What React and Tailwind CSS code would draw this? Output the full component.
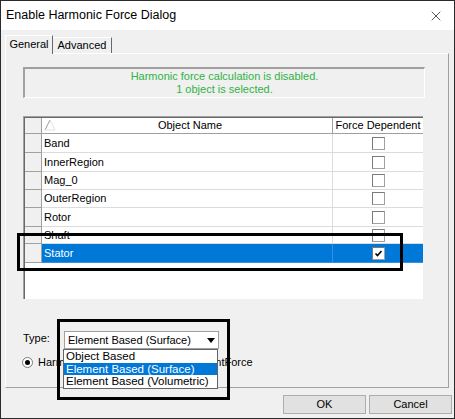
import { X } from "lucide-react";

const rows = [
  { name: "Band", h: "h-[19px]", checked: false },
  { name: "InnerRegion", h: "h-[19px]", checked: false },
  { name: "Mag_0", h: "h-[18px]", checked: false },
  { name: "OuterRegion", h: "h-[18px]", checked: false },
  { name: "Rotor", h: "h-[19px]", checked: false },
  { name: "Shaft", h: "h-[17px]", checked: false },
  { name: "Stator", h: "h-[19px]", checked: true, selected: true },
];

function CheckBox({ checked }) {
  return (
    <span className="flex h-[13px] w-[13px] items-center justify-center border border-[#a0a0a0] border-l-[#7a7a7a] border-t-[#7a7a7a] bg-white">
      {checked && (
        <svg width="9" height="9" viewBox="0 0 9 9">
          <path d="M1.5 4.5 L3.5 6.5 L7.5 2" fill="none" stroke="#000" strokeWidth="1.6" />
        </svg>
      )}
    </span>
  );
}

function ObjectGrid() {
  return (
    <div className="ml-[17px] mt-[18px] h-[183px] w-[400px] border-l border-t border-[#a0a0a0] border-b-white border-r-white bg-white">
      <div className="h-full border-l border-t border-[#696969] border-r-0 border-b-0">
        <div className="flex h-[16px] border-b border-[#a0a0a0]">
          <div className="w-[17px] border-r border-[#a0a0a0] bg-[#f0f0f0]" />
          <div className="relative flex w-[291px] items-center justify-center border-r border-[#a0a0a0] bg-white">
            <svg className="absolute left-[2px] top-[1px]" width="12" height="12" viewBox="0 0 12 12">
              <path d="M1 11 L6 1" stroke="#9a9a9a" strokeWidth="1" fill="none" />
              <path d="M6 1 L11 11 L1 11" stroke="#e2e2e2" strokeWidth="1" fill="none" />
            </svg>
            <span className="pl-[6px]">Object Name</span>
          </div>
          <div className="flex flex-1 items-center justify-center bg-white">Force Dependent</div>
        </div>
        {rows.map((row) => (
          <div key={row.name} className={`flex ${row.h}`}>
            <div className="w-[17px] border-b border-r border-[#a0a0a0] bg-[#f0f0f0]" />
            <div
              className={`flex w-[291px] items-center border-b border-r pl-[2px] ${
                row.selected ? "border-[#3a8ee0] bg-[#0078d7] text-white" : "border-[#dcdcdc] text-black"
              }`}
            >
              {row.name}
            </div>
            <div
              className={`flex flex-1 items-center justify-center border-b ${
                row.selected ? "border-[#3a8ee0] bg-[#0078d7]" : "border-[#dcdcdc]"
              }`}
            >
              <CheckBox checked={row.checked} />
            </div>
          </div>
        ))}
      </div>
    </div>
  );
}

export default function App() {
  return (
    <div className="relative flex h-[419px] w-[455px] flex-col border border-[#2b2b2b] bg-[#f0f0f0] font-['Liberation_Sans',Arial,sans-serif] text-[11px] text-black">
      <div className="flex h-[29px] items-center justify-between bg-white pl-[5px] pr-[10px]">
        <span className="text-[12.5px]">Enable Harmonic Force Dialog</span>
        <X size={16} strokeWidth={1} className="text-black" />
      </div>

      <div className="flex gap-0 pl-[4px] pt-[5px]">
        <div className="z-10 -mb-px flex h-[19px] w-[48px] items-center justify-center border-l border-r border-t border-l-white border-r-[#696969] border-t-white bg-[#f0f0f0] pb-[2px]">
          General
        </div>
        <div className="mt-[2px] flex h-[16px] w-[59px] items-center justify-center border-r border-t border-r-[#696969] border-t-white">
          Advanced
        </div>
      </div>

      <div className="ml-[4px] flex h-[335px] w-[444px] flex-col border-b border-l border-r border-t border-b-[#a0a0a0] border-l-white border-r-[#a0a0a0] border-t-white">
        <div className="ml-[17px] mt-[13px] flex h-[31px] w-[402px] flex-col items-center justify-center border-b border-l-2 border-r border-t-2 border-b-white border-l-[#a0a0a0] border-r-white border-t-[#a0a0a0] leading-[13px] text-[#2fb344]">
          <span>Harmonic force calculation is disabled.</span>
          <span>1 object is selected.</span>
        </div>

        <ObjectGrid />

        <div className="ml-[17px] mt-[32px] flex h-[18px] items-center">
          <span className="w-[41px] -mt-[4px]">Type:</span>
          <div className="flex h-[18px] w-[155px] items-center justify-between border border-[#a0a0a0] bg-white pl-[3px]">
            <span>Element Based (Surface)</span>
            <span className="flex h-full w-[15px] items-center justify-center">
              <svg width="8" height="5" viewBox="0 0 8 5">
                <path d="M0 0 H8 L4 5 Z" fill="#000" />
              </svg>
            </span>
          </div>
        </div>

        <div className="ml-[16px] mt-[6px] flex h-[14px] items-center gap-[5px]">
          <span className="flex h-[11px] w-[11px] items-center justify-center rounded-full border border-[#7a7a7a] bg-white">
            <span className="h-[5px] w-[5px] rounded-full bg-black" />
          </span>
          <span>Harmonic Force based on ComponentForce</span>
        </div>
      </div>

      <div className="mt-[7px] flex justify-end gap-[3px] pr-[2px]">
        <button type="button" className="flex h-[19px] w-[83px] items-center justify-center border border-[#adadad] bg-[#e1e1e1]">
          OK
        </button>
        <button type="button" className="flex h-[19px] w-[83px] items-center justify-center border border-[#adadad] bg-[#e1e1e1]">
          Cancel
        </button>
      </div>

      <div className="absolute left-[62px] top-[348px] flex w-[155px] flex-col border border-[#646464] bg-white text-[11.5px] leading-[12.5px]">
        <span className="pl-[2px]">Object Based</span>
        <span className="bg-[#0078d7] pl-[2px] text-white">Element Based (Surface)</span>
        <span className="pl-[2px]">Element Based (Volumetric)</span>
      </div>

      <div className="absolute left-[16px] top-[232px] h-[38px] w-[386px] border-[3px] border-black" />
      <div className="absolute left-[56px] top-[318px] h-[81px] w-[173px] border-[3px] border-black" />
    </div>
  );
}
